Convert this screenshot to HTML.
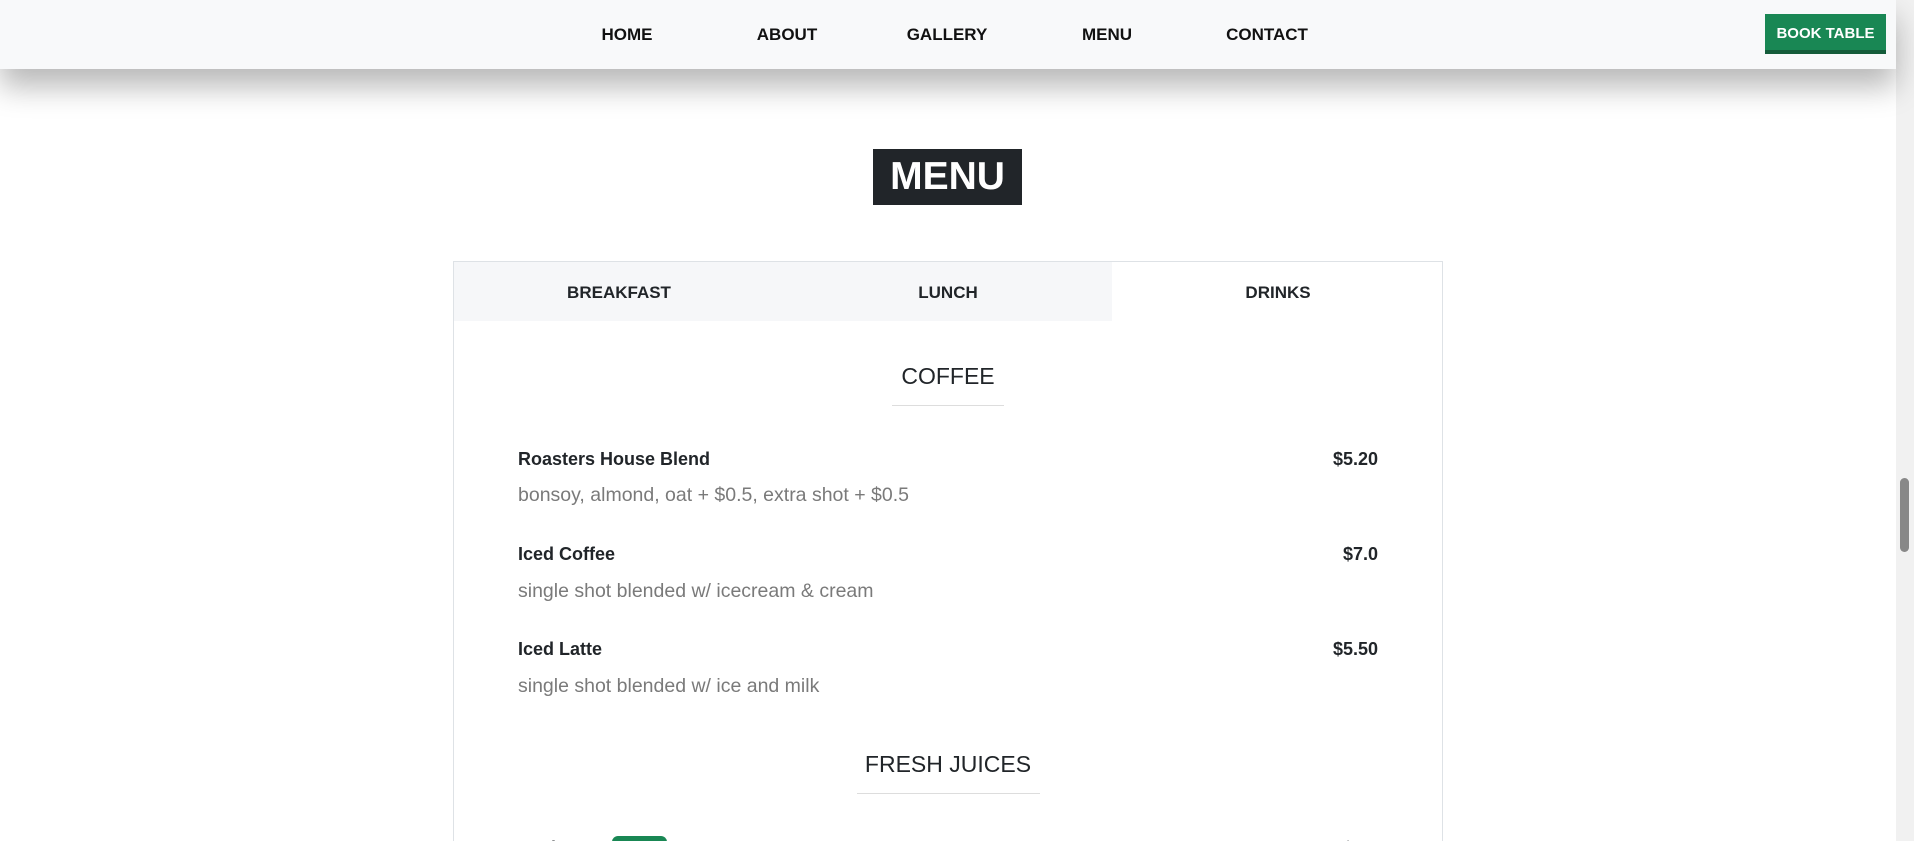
<!DOCTYPE html>
<html><head><meta charset="utf-8"><style>
*{margin:0;padding:0;box-sizing:border-box}
html,body{width:1914px;height:841px;overflow:hidden;background:#fff;font-family:"Liberation Sans",sans-serif;color:#212529}
#wrap{position:relative;width:1914px;height:841px;overflow:hidden}
.nav{position:absolute;left:0;top:0;width:1896px;height:69px;background:#f8f9fa;box-shadow:0 18px 30px rgba(0,0,0,.28);z-index:2}
.nav a{position:absolute;top:25px;font-size:17px;font-weight:600;transform:translateX(-50%);color:#111;white-space:nowrap}
.btn{position:absolute;left:1765px;top:14px;width:121px;height:40px;background:#198754;border-bottom:4px solid #145c3a;color:#fff;font-size:15px;font-weight:700;text-align:center;line-height:40px}
.sb{position:absolute;left:1896px;top:0;width:18px;height:841px;background:#f1f1f1}
.thumb{position:absolute;left:1900px;top:478px;width:9px;height:74px;background:#888;border-radius:5px}
.title{position:absolute;left:873px;top:149px;width:149px;height:56px;background:#212529;color:#fff;font-size:39px;font-weight:600;text-align:center;line-height:56px}
.card{position:absolute;left:453px;top:261px;width:990px;height:700px;border:1px solid #dee2e6}
.tabs{position:absolute;left:0;top:0;width:658px;height:59px;background:#f6f7f9}
.tab{position:absolute;top:21px;font-size:17px;font-weight:700;transform:translateX(-50%)}
.h{position:absolute;font-size:23px;font-weight:500;transform:translateX(-50%);white-space:nowrap}
.line{position:absolute;height:1px;background:#ddd}
.n{position:absolute;left:64px;font-size:18px;font-weight:600}
.d{position:absolute;left:64px;font-size:19.5px;color:#7a7a7a}
.p{position:absolute;right:64px;font-size:18px;font-weight:600}
</style></head><body><div id="wrap">
<div class="nav">
<a style="left:627px">HOME</a><a style="left:787px">ABOUT</a><a style="left:947px">GALLERY</a><a style="left:1107px">MENU</a><a style="left:1267px">CONTACT</a>
<div class="btn">BOOK TABLE</div>
</div>
<div class="sb"></div><div class="thumb"></div>
<div class="title">MENU</div>
<div class="card">
<div class="tabs"></div>
<div class="tab" style="left:165px">BREAKFAST</div>
<div class="tab" style="left:494px">LUNCH</div>
<div class="tab" style="left:824px">DRINKS</div>
<div class="h" style="left:494px;top:101px">COFFEE</div>
<div class="line" style="left:438px;width:112px;top:143px"></div>
<div class="n" style="top:187px">Roasters House Blend</div><div class="p" style="top:187px">$5.20</div>
<div class="d" style="top:222px">bonsoy, almond, oat + $0.5, extra shot + $0.5</div>
<div class="n" style="top:282px">Iced Coffee</div><div class="p" style="top:282px">$7.0</div>
<div class="d" style="top:318px">single shot blended w/ icecream &amp; cream</div>
<div class="n" style="top:377px">Iced Latte</div><div class="p" style="top:377px">$5.50</div>
<div class="d" style="top:413px">single shot blended w/ ice and milk</div>
<div class="h" style="left:494px;top:489px">FRESH JUICES</div>
<div class="line" style="left:403px;width:183px;top:531px"></div>
<div class="n" style="top:576px">Acai Wow</div>
<div style="position:absolute;left:158px;top:574px;width:55px;height:26px;background:#198754;border-radius:6px"></div>
<div class="p" style="top:576px">$9.0</div>
</div>
</div></body></html>
